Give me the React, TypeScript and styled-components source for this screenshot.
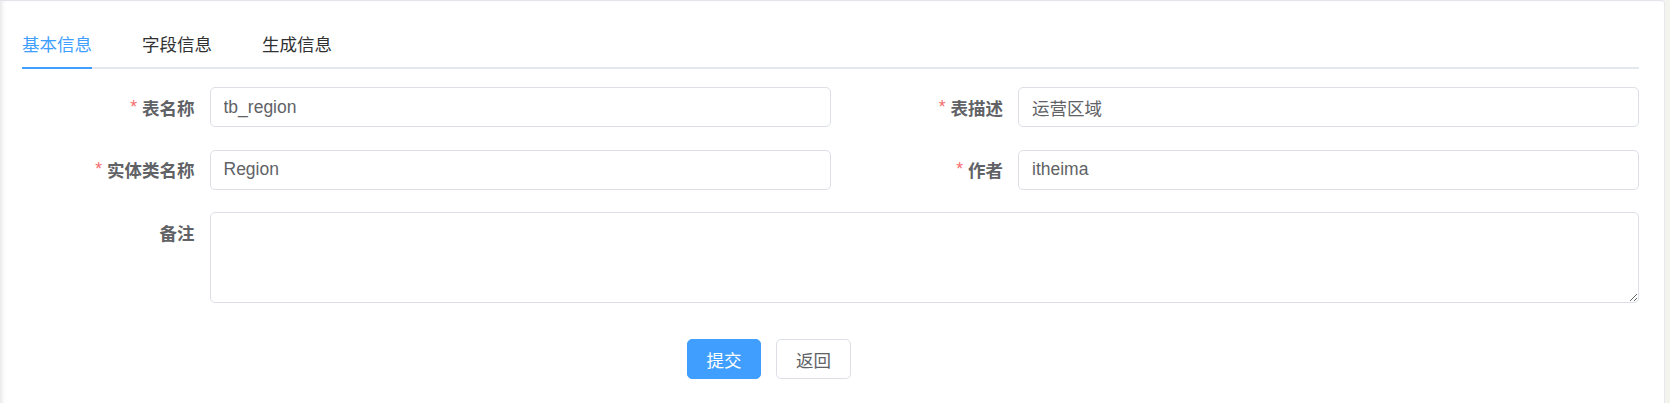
import React, { useState } from "react";
import styled, { createGlobalStyle, css } from "styled-components";

const GlobalStyle = createGlobalStyle`
  html, body {
    margin: 0;
    padding: 0;
    background: #f4f4ef;
    font-family: "Liberation Sans", Arial, "Noto Sans CJK SC", sans-serif;
  }
  * { box-sizing: border-box; }
`;

const Page = styled.div`
  width: 1670px;
  height: 403px;
  overflow: hidden;
  padding-right: 5px;
`;

const Card = styled.div`
  background: #ffffff;
  min-height: 420px;
  border-top: 1px solid #e4e5ea;
  border-right: 1px solid #e8e8ec;
  border-top-right-radius: 4px;
  box-shadow: inset 4px 0 4px -2px rgba(0, 0, 0, 0.1);
  padding: 18px 25px 0 22px;
`;

const TabHeader = styled.div`
  position: relative;
  display: flex;
  height: 50px;
  margin-bottom: 18px;
  &::after {
    content: "";
    position: absolute;
    left: 0;
    right: 0;
    bottom: 0;
    height: 2.5px;
    background: #e4e7ed;
  }
`;

const Tab = styled.div<{ $active?: boolean; $first?: boolean }>`
  position: relative;
  height: 50px;
  line-height: 50px;
  padding: 0 25px;
  font-size: 17.5px;
  font-family: "Noto Sans CJK SC", sans-serif;
  color: ${(p) => (p.$active ? "#409eff" : "#303133")};
  cursor: pointer;
  ${(p) =>
    p.$first &&
    css`
      padding-left: 0;
    `}
  ${(p) =>
    p.$active &&
    css`
      &::after {
        content: "";
        position: absolute;
        left: ${p.$first ? "0" : "25px"};
        right: 25px;
        bottom: 0;
        height: 2.5px;
        background: #409eff;
        z-index: 1;
      }
    `}
`;

const FormGrid = styled.div`
  display: grid;
  grid-template-columns: 1fr 1fr;
  row-gap: 22.5px;
`;

const FormItem = styled.div<{ $full?: boolean }>`
  display: flex;
  align-items: flex-start;
  ${(p) =>
    p.$full &&
    css`
      grid-column: 1 / span 2;
    `}
`;

const Label = styled.label`
  flex: 0 0 187.5px;
  height: 40px;
  display: flex;
  align-items: center;
  justify-content: flex-end;
  white-space: nowrap;
  padding-right: 15px;
  font-size: 17.5px;
  font-weight: 700;
  color: #606266;
  font-family: "Noto Sans CJK SC", sans-serif;
`;

const Star = styled.span`
  color: #f56c6c;
  margin-right: 5px;
  font-weight: 400;
  font-family: "Liberation Sans", sans-serif;
`;

const fieldBase = css`
  flex: 1;
  width: 100%;
  border: 1px solid #dcdfe6;
  border-radius: 5px;
  background: #fff;
  color: #606266;
  font-size: 17.5px;
  font-family: "Liberation Sans", Arial, "Noto Sans CJK SC", sans-serif;
  outline: none;
`;

const Input = styled.input`
  ${fieldBase};
  height: 40px;
  padding: 0 13px;
`;

const TextArea = styled.textarea`
  ${fieldBase};
  height: 91px;
  padding: 6px 13px;
  resize: vertical;
  display: block;
`;

const ButtonRow = styled.div`
  display: flex;
  gap: 15px;
  margin-top: 36px;
  padding-left: 665px;
`;

const Button = styled.button<{ $primary?: boolean }>`
  height: 40px;
  width: ${(p) => (p.$primary ? "74px" : "75px")};
  border-radius: 5px;
  font-size: 17.5px;
  font-family: "Noto Sans CJK SC", sans-serif;
  cursor: pointer;
  padding: 0;
  border: 1px solid ${(p) => (p.$primary ? "#409eff" : "#dcdfe6")};
  background: ${(p) => (p.$primary ? "#409eff" : "#ffffff")};
  color: ${(p) => (p.$primary ? "#ffffff" : "#606266")};
`;

const tabs = ["基本信息", "字段信息", "生成信息"];

export default function App() {
  const [active, setActive] = useState(0);
  return (
    <>
      <GlobalStyle />
      <Page>
        <Card>
          <TabHeader>
            {tabs.map((t, i) => (
              <Tab key={t} $active={i === active} $first={i === 0} onClick={() => setActive(i)}>
                {t}
              </Tab>
            ))}
          </TabHeader>
          <FormGrid>
            <FormItem>
              <Label><Star>*</Star>表名称</Label>
              <Input defaultValue="tb_region" />
            </FormItem>
            <FormItem>
              <Label><Star>*</Star>表描述</Label>
              <Input defaultValue="运营区域" />
            </FormItem>
            <FormItem>
              <Label><Star>*</Star>实体类名称</Label>
              <Input defaultValue="Region" />
            </FormItem>
            <FormItem>
              <Label><Star>*</Star>作者</Label>
              <Input defaultValue="itheima" />
            </FormItem>
            <FormItem $full>
              <Label>备注</Label>
              <TextArea />
            </FormItem>
          </FormGrid>
          <ButtonRow>
            <Button $primary>提交</Button>
            <Button>返回</Button>
          </ButtonRow>
        </Card>
      </Page>
    </>
  );
}
